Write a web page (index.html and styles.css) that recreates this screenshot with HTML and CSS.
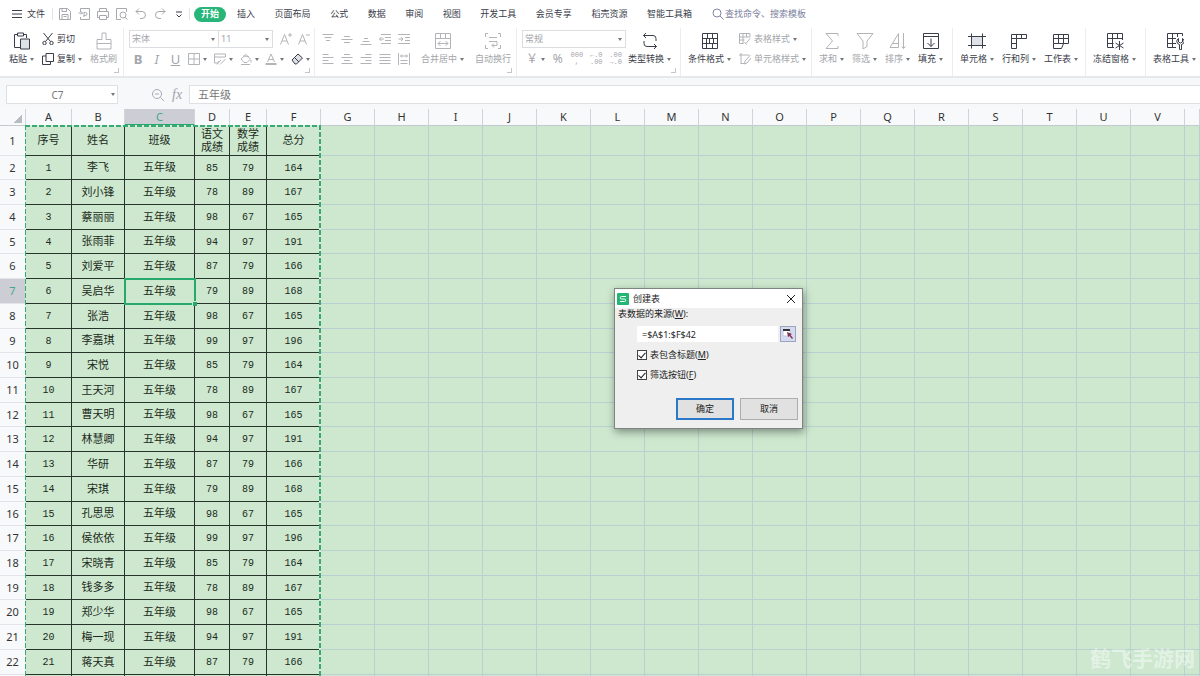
FILE: index.html
```
<!DOCTYPE html>
<html lang="zh-CN">
<head>
  <meta charset="UTF-8" />
  <title>创建表</title>
  <link rel="stylesheet" href="styles.css">
</head>
<body>

  <!-- icons -->
  <svg class="sprite" aria-hidden="true">
    <symbol id="i-menu" viewBox="0 0 12 12"><path d="M1 2.500h10M1 6h10M1 9.500h10"/></symbol>
    <symbol id="i-save" viewBox="0 0 12 12"><path d="M.5 11.500V.5h8l3 3v8zM3 .5v3h4.500v-3M3 11.500v-5h6v5M4.500 8.500h3"/></symbol>
    <symbol id="i-export" viewBox="0 0 12 12"><path d="M2.500 4V.5h9v11h-9V9M.5 5h4M3 3.500L4.500 5 3 6.500M6 9V4.500h1.500a1.500 1.500 0 010 3H6"/></symbol>
    <symbol id="i-print" viewBox="0 0 12 12"><path d="M2.500 3.500v-3h7v3M2.500 9.500h-2v-6h11v6h-2M2.500 7.500h7v4h-7z"/></symbol>
    <symbol id="i-preview" viewBox="0 0 12 12"><path d="M5 11.500H.5V.5h10V4M9 9.500l2.500 2"/><circle cx="7" cy="7" r="3"/></symbol>
    <symbol id="i-undo" viewBox="0 0 12 12"><path d="M4 .5L1 3.500l3 3M1 3.500h6a3.500 3.500 0 010 7H5"/></symbol>
    <symbol id="i-redo" viewBox="0 0 12 12"><path d="M8 .5l3 3-3 3M11 3.500H5a3.500 3.500 0 000 7h2"/></symbol>
    <symbol id="i-more" viewBox="0 0 12 12"><path d="M3 4h6M3.500 6.500L6 9l2.500-2.500"/></symbol>
    <symbol id="i-search" viewBox="0 0 12 12"><circle cx="5" cy="5" r="4"/><path d="M8 8l3.500 3.500"/></symbol>
    <symbol id="i-zoomout" viewBox="0 0 14 14"><circle cx="6" cy="6" r="4.500"/><path d="M9.500 9.500L13 13M4 6h4"/></symbol>

    <symbol id="i-paste" viewBox="0 0 18 18"><path d="M7 15.500H1.500v-13H4M11 2.500h2.500V6M4.500 1h6v3h-6z"/><path class="shade" d="M7.500 7h9v10h-9z"/></symbol>
    <symbol id="i-cut" viewBox="0 0 12 12"><path d="M1.500 0l7 8.500M10.500 0l-7 8.500"/><circle cx="2.500" cy="10" r="1.700"/><circle cx="9.500" cy="10" r="1.700"/></symbol>
    <symbol id="i-copy" viewBox="0 0 12 12"><path d="M4 .5h7.500v8H4zM4 3H.5v8.500h8v-3"/></symbol>
    <symbol id="i-brush" viewBox="0 0 18 18"><path d="M7 7.500V1h4v6.500h5V17H2V7.500zM2 11.500h14"/></symbol>

    <symbol id="i-incfont" viewBox="0 0 12 12"><path d="M.5 11.500L4.500 1.500l4 10M2 8h5M8 2h4M10 0v4"/></symbol>
    <symbol id="i-decfont" viewBox="0 0 12 12"><path d="M.5 11.500L4.500 1.500l4 10M2 8h5M8 2h4"/></symbol>
    <symbol id="i-border" viewBox="0 0 12 12"><path d="M.5.5h11v11H.5zM6 .5v11M.5 6h11"/></symbol>
    <symbol id="i-cellstyle" viewBox="0 0 12 12"><path d="M11.500 4V1H.5v9h4M.5 4h11M4 10l3-3M6 11.500l5.500-5.500M5 8l-2 3.500"/></symbol>
    <symbol id="i-fill" viewBox="0 0 12 12"><path d="M1 6l5-4.500L10.500 6 7 9.500H4zM1 11.500h9M3 3l6 .5M11 7v2.500"/></symbol>
    <symbol id="i-color" viewBox="0 0 12 12"><path d="M2.500 9L6 1l3.500 8M3.500 6.500h5"/><path class="thick" d="M.5 11h11"/></symbol>
    <symbol id="i-eraser" viewBox="0 0 12 12"><path class="shade" d="M1 7l6-6 4.500 4-6 6H4z"/><path d="M3.500 4.500L8 9"/></symbol>

    <symbol id="i-top" viewBox="0 0 12 12"><path d="M.5 1.500h11M2.500 4.500h7M4 7.500h4"/></symbol>
    <symbol id="i-middle" viewBox="0 0 12 12"><path d="M3 3.500h6M.5 6.500h11M3 9.500h6"/></symbol>
    <symbol id="i-bottom" viewBox="0 0 12 12"><path d="M4 5.500h4M2.500 8.500h7M.5 11.500h11"/></symbol>
    <symbol id="i-outdent" viewBox="0 0 12 12"><path d="M2 1.500h10M6 4.500h6M6 7.500h6M2 10.500h10M.5 6H5M2.500 4l-2 2 2 2"/></symbol>
    <symbol id="i-indent" viewBox="0 0 12 12"><path d="M0 1.500h12M7 4.500h5M7 7.500h5M0 10.500h12M.5 6H5M3 4l2 2-2 2"/></symbol>
    <symbol id="i-left" viewBox="0 0 12 12"><path d="M.5 1.500h6M.5 4.500h11M.5 7.500h6M.5 10.500h11"/></symbol>
    <symbol id="i-center" viewBox="0 0 12 12"><path d="M3 1.500h6M.5 4.500h11M3 7.500h6M.5 10.500h11"/></symbol>
    <symbol id="i-right" viewBox="0 0 12 12"><path d="M5.500 1.500h6M.5 4.500h11M5.500 7.500h6M.5 10.500h11"/></symbol>
    <symbol id="i-justify" viewBox="0 0 12 12"><path d="M.5 1.500h11M.5 4.500h11M.5 7.500h11M.5 10.500h11"/></symbol>
    <symbol id="i-spread" viewBox="0 0 12 12"><path d="M.5 0v12M11.500 0v12M2.500 3h7M4 1.500L2.500 3 4 4.500M8 1.500L9.500 3 8 4.500M2.500 7.500h7M2.500 10.500h7"/></symbol>
    <symbol id="i-merge" viewBox="0 0 18 18"><path d="M1.500 1.500h15v15h-15zM1.500 6.500h15M6.500 1.500v5M11.500 1.500v5M4 11.500h10M6.500 9L4 11.500 6.500 14M11.500 9l2.500 2.500-2.500 2.500"/></symbol>
    <symbol id="i-wrap" viewBox="0 0 18 18"><path d="M4 1.500H1.500V5M14 1.500h2.500V5M4 16.500H1.500V13M14 16.500h2.500V13M5 5.500h8M5 9.500h8v4H8M10 11.500l-2 2 2 2"/></symbol>

    <symbol id="i-convert" viewBox="0 0 18 18"><path d="M5 1L2.500 3.500 5 6M2.500 3.500H12a3 3 0 013 3V9M13 12l2.500 2.500L13 17M15.500 14.500H6a3 3 0 01-3-3V9"/></symbol>
    <symbol id="i-cond" viewBox="0 0 18 18"><path d="M1.500 1.500h15v15h-15zM1.500 6.500h15M1.500 11.500h15M6.500 1.500v5M11.500 1.500v5M8.500 6.500v5M12.500 6.500v5M5.500 6.500v10M11.500 11.500v5"/></symbol>
    <symbol id="i-tablestyle" viewBox="0 0 12 12"><path d="M11 4V.5H.5v10h4M.5 4h10.500M.5 7h5M4 .5v10M7.500 .5V4M7 10.500l4-5M5.500 9l2 2.500"/></symbol>
    <symbol id="i-cellfmt" viewBox="0 0 12 12"><path d="M2 0v11M0 2h10M2 10.500h3M11.500 2L6 8l-.5 3 2.500-1 4-5"/></symbol>
    <symbol id="i-sum" viewBox="0 0 18 18"><path d="M15 4V1.500H3L9.500 9 3 16.500h12V14"/></symbol>
    <symbol id="i-filter" viewBox="0 0 18 18"><path d="M1 1.500h16l-6 7.500v5.500L7 17V9z"/></symbol>
    <symbol id="i-sort" viewBox="0 0 18 18"><path d="M1 15.500L9.500 1.500v14zM4 11.500h5.500M14.500 1v15.500M12.500 14.500l2 2 2-2"/></symbol>
    <symbol id="i-filldown" viewBox="0 0 18 18"><path d="M1.500 1.500h15v15h-15zM1.500 4.500h15M9 6.500v8M5.500 11L9 14.500l3.500-3.500"/></symbol>
    <symbol id="i-cells" viewBox="0 0 18 18"><path class="shade" d="M3.500 4.500h11v9h-11z"/><path d="M0 4.500h18M0 13.500h18M3.500 1.500v15M14.500 1.500v15"/></symbol>
    <symbol id="i-rowcol" viewBox="0 0 18 18"><path d="M1.500 2.500h15v4h-10v10h-5zM1.500 6.500h5v-4M1.500 11.500h5M11.500 2.500v4"/></symbol>
    <symbol id="i-worksheet" viewBox="0 0 18 18"><path d="M1.500 2.500h15v9h-15zM1.500 6.500h15M6.500 2.500v9M11.500 2.500v9M1.500 11.500v5h8l2-5"/></symbol>
    <symbol id="i-freeze" viewBox="0 0 18 18"><path d="M8 15.500H1.500v-14h15V8M1.500 6.500h15M1.500 11.500h6M6.500 1.500v14M11.500 1.500v5M13.500 9v9M9.500 11l8 5M17.500 11l-8 5"/></symbol>
    <symbol id="i-tabletool" viewBox="0 0 18 18"><path d="M10 15.500H1.500v-14h15V4M1.500 6.500H10M1.500 11.500H10M6.500 1.500v14M11.500 1.500V5"/><path d="M13.500 17.500v-5a3.200 3.200 0 01-1-6v3.500l2 1 2-1V6.500a3.200 3.200 0 01-1 6v5z"/></symbol>
  </svg>

  <header class="tabbar">
    <button class="file"><svg><use href="#i-menu"/></svg>文件</button>
    <div class="quick">
      <button aria-label="保存"><svg><use href="#i-save"/></svg></button>
      <button aria-label="输出"><svg><use href="#i-export"/></svg></button>
      <button aria-label="打印"><svg><use href="#i-print"/></svg></button>
      <button aria-label="预览"><svg><use href="#i-preview"/></svg></button>
      <button aria-label="撤销"><svg><use href="#i-undo"/></svg></button>
      <button aria-label="恢复"><svg><use href="#i-redo"/></svg></button>
      <button aria-label="更多" class="dark"><svg><use href="#i-more"/></svg></button>
    </div>
    <button class="tab-active">开始</button>
    <nav class="tabs">
      <a href="#">插入</a>
      <a href="#">页面布局</a>
      <a href="#">公式</a>
      <a href="#">数据</a>
      <a href="#">审阅</a>
      <a href="#">视图</a>
      <a href="#">开发工具</a>
      <a href="#">会员专享</a>
      <a href="#">稻壳资源</a>
      <a href="#">智能工具箱</a>
    </nav>
    <label class="search"><svg><use href="#i-search"/></svg><input type="text" placeholder="查找命令、搜索模板" aria-label="查找命令"></label>
  </header>

  <section class="ribbon">
    <div class="group g-clip corner">
      <button class="tool"><svg><use href="#i-paste"/></svg><span class="arrow">粘贴</span></button>
      <div class="stack">
        <button class="mini"><svg><use href="#i-cut"/></svg>剪切</button>
        <button class="mini"><svg><use href="#i-copy"/></svg><span class="arrow">复制</span></button>
      </div>
      <button class="tool off"><svg><use href="#i-brush"/></svg><span>格式刷</span></button>
    </div>

    <div class="group g-font off corner">
      <div class="stack">
        <div class="line">
          <div class="combos">
            <span class="combo arrow"><select aria-label="字体"><option>宋体</option></select></span>
            <span class="combo size arrow"><select aria-label="字号"><option>11</option></select></span>
          </div>
          <button aria-label="增大字号"><svg><use href="#i-incfont"/></svg></button>
          <button aria-label="减小字号"><svg><use href="#i-decfont"/></svg></button>
        </div>
        <div class="line">
          <button class="letter"><b>B</b></button>
          <button class="letter"><i>I</i></button>
          <button class="letter"><u>U</u></button>
          <button class="arrow" aria-label="边框"><svg><use href="#i-border"/></svg></button>
          <button class="arrow" aria-label="单元格样式"><svg><use href="#i-cellstyle"/></svg></button>
          <button class="arrow" aria-label="填充颜色"><svg><use href="#i-fill"/></svg></button>
          <button class="arrow" aria-label="字体颜色"><svg><use href="#i-color"/></svg></button>
          <button class="arrow dark" aria-label="清除"><svg><use href="#i-eraser"/></svg></button>
        </div>
      </div>
    </div>

    <div class="group g-align off corner">
      <div class="stack">
        <div class="line">
          <button aria-label="顶端对齐"><svg><use href="#i-top"/></svg></button>
          <button aria-label="垂直居中"><svg><use href="#i-middle"/></svg></button>
          <button aria-label="底端对齐"><svg><use href="#i-bottom"/></svg></button>
          <button aria-label="减少缩进"><svg><use href="#i-outdent"/></svg></button>
          <button aria-label="增加缩进"><svg><use href="#i-indent"/></svg></button>
        </div>
        <div class="line">
          <button aria-label="左对齐"><svg><use href="#i-left"/></svg></button>
          <button aria-label="居中"><svg><use href="#i-center"/></svg></button>
          <button aria-label="右对齐"><svg><use href="#i-right"/></svg></button>
          <button aria-label="两端对齐"><svg><use href="#i-justify"/></svg></button>
          <button aria-label="分散对齐"><svg><use href="#i-spread"/></svg></button>
        </div>
      </div>
      <button class="tool"><svg><use href="#i-merge"/></svg><span class="arrow">合并居中</span></button>
      <button class="tool"><svg><use href="#i-wrap"/></svg><span>自动换行</span></button>
    </div>

    <div class="group g-number corner">
      <div class="stack off">
        <span class="combo arrow"><select aria-label="数字格式"><option>常规</option></select></span>
        <div class="line">
          <button class="letter arrow">￥</button>
          <button class="letter">%</button>
          <button class="digits">000<br>,</button>
          <button class="digits">←.0<br>.00</button>
          <button class="digits">.00<br>→.0</button>
        </div>
      </div>
      <button class="tool"><svg><use href="#i-convert"/></svg><span class="arrow">类型转换</span></button>
    </div>

    <div class="group g-style">
      <button class="tool"><svg><use href="#i-cond"/></svg><span class="arrow">条件格式</span></button>
      <div class="stack off">
        <button class="mini"><svg><use href="#i-tablestyle"/></svg><span class="arrow">表格样式</span></button>
        <button class="mini"><svg><use href="#i-cellfmt"/></svg><span class="arrow">单元格样式</span></button>
      </div>
    </div>

    <div class="group g-edit">
      <button class="tool off"><svg><use href="#i-sum"/></svg><span class="arrow">求和</span></button>
      <button class="tool off"><svg><use href="#i-filter"/></svg><span class="arrow">筛选</span></button>
      <button class="tool off"><svg><use href="#i-sort"/></svg><span class="arrow">排序</span></button>
      <button class="tool"><svg><use href="#i-filldown"/></svg><span class="arrow">填充</span></button>
    </div>

    <div class="group g-cells">
      <button class="tool"><svg><use href="#i-cells"/></svg><span class="arrow">单元格</span></button>
      <button class="tool"><svg><use href="#i-rowcol"/></svg><span class="arrow">行和列</span></button>
      <button class="tool"><svg><use href="#i-worksheet"/></svg><span class="arrow">工作表</span></button>
    </div>

    <div class="group g-freeze">
      <button class="tool"><svg><use href="#i-freeze"/></svg><span class="arrow">冻结窗格</span></button>
    </div>

    <div class="group g-tools">
      <button class="tool"><svg><use href="#i-tabletool"/></svg><span class="arrow">表格工具</span></button>
    </div>
  </section>

  <section class="formula-bar">
    <span class="namebox arrow"><input type="text" value="C7" aria-label="名称框"></span>
    <button class="zoom" aria-label="浏览"><svg><use href="#i-zoomout"/></svg></button>
    <button class="fx">fx</button>
    <input class="formula" type="text" value="五年级" aria-label="编辑栏">
  </section>

  <main class="sheet">
    <table id="grid">
      <colgroup>
        <col class="c-head"><col class="c-a"><col class="c-b"><col class="c-c"><col class="c-d"><col class="c-e">
      </colgroup>
      <thead></thead>
      <tbody></tbody>
    </table>
    <div class="ants"></div>
    <div class="watermark">鹤飞手游网</div>
  </main>

  <form class="dialog" role="dialog" aria-labelledby="dlgTitle">
    <div class="dialog-title">
      <svg class="logo" viewBox="0 0 12 12"><rect width="12" height="12" rx="1"/><path d="M9 3.500H4.500a1.200 1.200 0 000 2.500h3a1.200 1.200 0 010 2.500H3"/></svg>
      <span id="dlgTitle">创建表</span>
      <button type="button" class="close" aria-label="关闭"><svg viewBox="0 0 10 10"><path d="M1 1l8 8M9 1L1 9"/></svg></button>
    </div>
    <label class="source" for="range">表数据的来源(<u>W</u>):</label>
    <div class="range">
      <input type="text" id="range" value="=$A$1:$F$42">
      <button type="button" class="picker" aria-label="选择区域"><svg viewBox="0 0 12 12"><path class="sheetline" d="M1 2h7v6H1z"/><path class="bar" d="M1 1h7v2H1z"/><path class="cursor" d="M5 4l5 2-1.500 1 2.500 3-1 1-2.500-3L6 9z"/></svg></button>
    </div>
    <label class="check"><input type="checkbox" checked>表包含标题(<u>M</u>)</label>
    <label class="check"><input type="checkbox" checked>筛选按钮(<u>F</u>)</label>
    <div class="actions">
      <button type="button" class="primary">确定</button>
      <button type="button">取消</button>
    </div>
  </form>

  <script src="sheet.js"></script>
</body>
</html>
```
FILE: styles.css
```
* {
  box-sizing: border-box;
}

body {
  margin: 0;
  height: 100vh;
  display: flex;
  flex-direction: column;
  overflow: hidden;
  position: relative;
  background-color: #fff;
  color: #3a3d4a;
  font-family: "Noto Sans", "Noto Sans CJK SC", sans-serif;
  font-size: 9px;
  line-height: 12px;
}

button, input, select {
  font: inherit;
  color: inherit;
  border: none;
  background: none;
  margin: 0;
  padding: 0;
  outline: none;
}

button {
  display: flex;
  align-items: center;
  white-space: nowrap;
}

a {
  color: inherit;
  text-decoration: none;
}

svg {
  width: 12px;
  height: 12px;
  flex: none;
  fill: none;
  stroke: currentColor;
  stroke-width: 1;
}

.sprite {
  position: absolute;
  width: 0;
  height: 0;
}

.shade {
  fill: #dfe1e8;
}

.thick {
  stroke-width: 2;
}

.off {
  color: #a3a5aa;
}

.off svg {
  color: #b2b4b8;
}

.dark, .dark svg {
  color: #3a3d4a;
}

/* small drop-down triangle */
.arrow {
  display: flex;
  align-items: center;
  gap: 3px;
}

.arrow::after {
  content: "";
  flex: none;
  border: 2px solid transparent;
  border-top: 3px solid #777;
  border-bottom: 0;
}

/* TABS */
.tabbar {
  flex: none;
  height: 28px;
  display: flex;
  align-items: center;
  padding-left: 11px;
}

.file {
  gap: 4px;
  padding-right: 7px;
  border-right: 1px solid #e4e4e6;
}

.quick {
  display: flex;
  gap: 7px;
  padding: 0 4px 0 6px;
  margin-right: 4px;
  border-right: 1px solid #e4e4e6;
  color: #a6a8ad;
}

.quick .dark {
  color: #3a3d4a;
}

.tab-active {
  height: 15px;
  padding: 0 7px;
  border-radius: 8px;
  background-color: #27b57a;
  color: #fff;
  font-weight: bold;
}

.tabs {
  width: 455px;
  margin-left: 11px;
  display: flex;
  justify-content: space-between;
  white-space: nowrap;
}

.search {
  display: flex;
  align-items: center;
  gap: 1px;
  margin-left: 20px;
  color: #8487a3;
}

.search input::placeholder {
  color: #7b7f9e;
}

/* RIBBON */
.ribbon {
  flex: none;
  height: 48px;
  display: flex;
  overflow: hidden;
}

.group {
  flex: none;
  display: flex;
  gap: 8px;
  padding: 2px 0 8px 7px;
  border-right: 1px solid #ededef;
  position: relative;
}

.corner::after {
  content: "";
  position: absolute;
  right: 4px;
  bottom: 3px;
  width: 4px;
  height: 4px;
  border-right: 1px solid #c5c6ca;
  border-bottom: 1px solid #c5c6ca;
}

.g-clip {
  width: 124px;
  padding-left: 9px;
}

.g-font {
  width: 191px;
  padding-left: 5px;
}

.g-align {
  width: 202px;
  gap: 11px;
}

.g-number {
  width: 164px;
  padding-left: 5px;
  gap: 2px;
}

.g-style {
  width: 131px;
}

.g-edit {
  width: 141px;
}

.g-cells {
  width: 133px;
}

.g-freeze {
  width: 60px;
}

.g-tools {
  border-right: none;
}

.tool {
  flex-direction: column;
  justify-content: space-between;
  padding: 2px 0 3px;
  min-width: 25px;
}

.tool svg {
  width: 18px;
  height: 18px;
}

.stack {
  display: flex;
  flex-direction: column;
  justify-content: space-between;
}

.mini {
  height: 18px;
  gap: 3px;
}

.line {
  height: 18px;
  display: flex;
  align-items: center;
  justify-content: space-between;
}

.g-font .stack {
  width: 181px;
}

.g-font .line + .line {
  padding-left: 3px;
}

.g-align .stack {
  width: 88px;
}

.g-number .stack {
  width: 104px;
}

.g-number .line {
  padding: 0 4px;
}

.combos {
  display: flex;
  width: 144px;
}

.combo {
  flex: 1;
  height: 18px;
  padding: 0 3px 0 2px;
  border: 1px solid #dcdde0;
}

.stack > .combo {
  flex: none;
}

.combo.size {
  flex: none;
  width: 54px;
  border-left: none;
}

.combo select {
  appearance: none;
  flex: 1;
  min-width: 0;
}

.letter {
  min-width: 12px;
  justify-content: center;
  font-size: 13px;
}

.g-number .letter {
  font-size: 12px;
}

.digits {
  display: block;
  font-family: "Liberation Mono", monospace;
  font-size: 7px;
  line-height: 7px;
}

/* FORMULA BAR */
.formula-bar {
  flex: none;
  height: 33px;
  display: flex;
  align-items: center;
  padding: 2px 0 0 6px;
  border-top: 2px solid #e7e8ea;
  background-color: #f7f8fa;
  color: #777;
  font-size: 11px;
}

.namebox {
  width: 112px;
  height: 19px;
  padding-right: 2px;
  background-color: #fff;
  border: 1px solid #dfe0e4;
}

.namebox input {
  flex: 1;
  min-width: 0;
  text-align: center;
  font-size: 10px;
}

.zoom {
  margin-left: 33px;
  color: #a9abb0;
}

.zoom svg {
  width: 14px;
  height: 14px;
}

.fx {
  margin: 0 7px;
  color: #a0a2a8;
  font-family: "Liberation Serif", serif;
  font-style: italic;
  font-size: 14px;
}

.formula {
  flex: 1;
  height: 19px;
  padding: 0 0 2px 8px;
  background-color: #fff;
  border: 1px solid #dfe0e4;
  border-right: none;
}

/* SHEET */
.sheet {
  flex: 1;
  min-height: 0;
  position: relative;
  overflow: hidden;
  background-color: #cde8cf;
}

table {
  width: 100%;
  table-layout: fixed;
  border-collapse: separate;
  border-spacing: 0;
}

.c-head { width: 26px; }
.c-a { width: 46px; }
.c-b { width: 53px; }
.c-c { width: 70px; }
.c-d { width: 35px; }
.c-e { width: 37px; }
.c-std { width: 54px; }

th, td {
  padding: 0;
  overflow: hidden;
  text-align: center;
  font-weight: normal;
  white-space: nowrap;
  border-right: 1px solid #b9d0d0;
  border-bottom: 1px solid #b9d0d0;
}

th {
  background-color: #f8f9fb;
  border-color: #e2e4e9;
  font-size: 11px;
  color: #333;
}

thead th {
  height: 17px;
  border-right-color: #d0d3d9;
  border-bottom-color: #c3c9cc;
}

th.current {
  background-color: #cdced5;
  color: #3fa98a;
}

thead th.current {
  border-bottom: 2px solid #27a96c;
}

th.corner-cell {
  background-image: linear-gradient(135deg, transparent 50%, #b9bcc2 50%);
  background-size: 9px 9px;
  background-position: 13px 5px;
  background-repeat: no-repeat;
}

tbody tr {
  height: 25px;
}

/* the row height is a bit under 25px, so two rows in seven lose a pixel */
tbody tr:nth-child(7n + 2),
tbody tr:nth-child(7n + 5) {
  height: 24px;
}

tbody tr:first-child {
  height: 30px;
}

td.filled {
  padding-top: 2px;
  border-color: #26342b;
  color: #1c2a20;
  font-family: "Liberation Mono", "Noto Sans CJK SC", monospace;
  font-size: 11px;
  line-height: 13px;
}

td.number {
  padding-top: 1px;
  font-size: 10px;
}

td.active {
  position: relative;
  overflow: visible;
  outline: 2px solid #27a96c;
  outline-offset: -1px;
}

/* fill handle */
td.active::after {
  content: "";
  position: absolute;
  right: -3px;
  bottom: -3px;
  width: 4px;
  height: 4px;
  background-color: #27a96c;
  border: solid #cde8cf;
  border-width: 1px 0 0 1px;
  box-sizing: content-box;
}

/* copy marquee round A1:F42 */
.ants {
  position: absolute;
  left: 25px;
  top: 16px;
  width: 296px;
  bottom: -4px;
  background-image:
    repeating-linear-gradient(90deg, #3aa976 0 5px, #d9eedd 5px 7px),
    repeating-linear-gradient(180deg, #3aa976 0 5px, #d9eedd 5px 7px),
    repeating-linear-gradient(180deg, #3aa976 0 5px, #d9eedd 5px 7px);
  background-size: 100% 2px, 1px 100%, 2px 100%;
  background-position: 0 0, 0 0, 100% 0;
  background-repeat: no-repeat;
  pointer-events: none;
}

.watermark {
  position: absolute;
  right: 5px;
  bottom: 6px;
  font-size: 21px;
  line-height: 24px;
  font-weight: bold;
  color: rgba(255, 255, 255, 0.45);
}

/* DIALOG */
.dialog {
  position: absolute;
  left: 614px;
  top: 288px;
  width: 189px;
  padding-bottom: 8px;
  background-color: #efefef;
  border: 1px solid #7c857e;
  box-shadow: 1px 3px 8px rgba(0, 0, 0, 0.4);
  color: #222;
}

.dialog-title {
  height: 19px;
  display: flex;
  align-items: center;
  gap: 4px;
  padding: 0 6px 0 2px;
  background-color: #fff;
}

.logo rect {
  fill: #22b573;
  stroke: none;
}

.logo path {
  stroke: #fff;
}

.close {
  margin-left: auto;
}

.close svg {
  width: 10px;
  height: 10px;
}

.source {
  display: block;
  padding-left: 3px;
}

.range {
  display: flex;
  gap: 2px;
  margin: 6px 6px 3px 22px;
}

.range input {
  flex: 1;
  min-width: 0;
  height: 16px;
  padding-left: 5px;
  background-color: #fff;
}

.picker {
  width: 16px;
  height: 16px;
  justify-content: center;
  background-color: #d5daf0;
  border: 1px solid #9ba3bd;
}

.bar {
  fill: #333;
  stroke: none;
}

.sheetline {
  fill: #fff;
  stroke: #c0c6de;
}

.cursor {
  fill: #84324f;
  stroke: none;
}

.check {
  height: 20px;
  display: flex;
  align-items: center;
  padding-left: 22px;
}

.check input {
  appearance: none;
  width: 10px;
  height: 10px;
  margin-right: 3px;
  background-color: #fff;
  border: 1px solid #444;
  display: flex;
  justify-content: center;
}

.check input:checked::after {
  content: "";
  width: 3px;
  height: 6px;
  border-right: 1px solid #222;
  border-bottom: 1px solid #222;
  transform: rotate(42deg);
}

.actions {
  display: flex;
  justify-content: flex-end;
  gap: 6px;
  padding: 13px 4px 0 0;
}

.actions button {
  width: 58px;
  height: 22px;
  justify-content: center;
  background-color: #e1e1e1;
  border: 1px solid #adadad;
}

.actions .primary {
  border: 2px solid #2b78c8;
}
```
FILE: sheet.js
```
const letters = "ABCDEFGHIJKLMNOPQRSTUV".split("");
const names = [
  "李飞", "刘小锋", "蔡丽丽", "张雨菲", "刘爱平", "吴启华", "张浩",
  "李嘉琪", "宋悦", "王天河", "曹天明", "林慧卿", "华研", "宋琪",
  "孔思思", "侯依依", "宋晓青", "钱多多", "郑少华", "梅一现", "蒋天真"
];
const scores = [
  [85, 79], [78, 89], [98, 67], [94, 97], [87, 79], [79, 89], [98, 67], [99, 97]
];
const totals = [164, 167, 165, 191, 166, 168, 165, 196];
const titles = ["序号", "姓名", "班级", "语文<br>成绩", "数学<br>成绩", "总分"];

const table = document.getElementById("grid");

// columns F to V share one width, the last one takes what is left
table.querySelector("colgroup").innerHTML += '<col class="c-std">'.repeat(17) + "<col>";

let head = '<tr><th class="corner-cell"></th>';
letters.forEach(l => {
  head += `<th class="${l === "C" ? "current" : ""}">${l}</th>`;
});
table.tHead.innerHTML = head + "<th></th></tr>";

function addRow(label, values) {
  let html = `<tr><th class="${label === 7 ? "current" : ""}">${label}</th>`;
  for (let i = 0; i <= letters.length; i++) {
    const value = values[i];
    if (value === undefined) {
      html += "<td></td>";
      continue;
    }
    let cls = "filled";
    if (typeof value === "number") cls += " number";
    if (label === 7 && i === 2) cls += " active";
    html += `<td class="${cls}">${value}</td>`;
  }
  return html + "</tr>";
}

let body = addRow(1, titles);
names.forEach((name, i) => {
  const [chinese, maths] = scores[i % 8];
  body += addRow(i + 2, [i + 1, name, "五年级", chinese, maths, totals[i % 8]]);
});
body += addRow("", ["", "", "", "", "", ""]);
table.tBodies[0].innerHTML = body;
```
